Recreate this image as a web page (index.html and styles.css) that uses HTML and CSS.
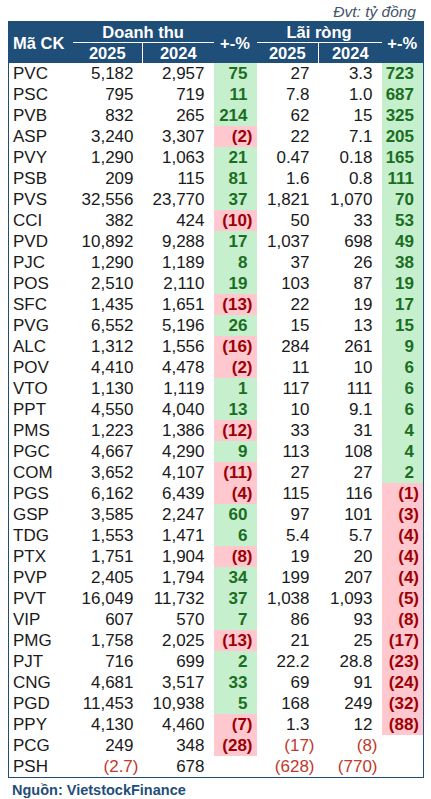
FILE: index.html
```html
<!DOCTYPE html>
<html>
<head>
  <meta charset="UTF-8">
  <meta name="viewport" content="width=device-width, initial-scale=1">
  <title>Doanh thu - Lãi ròng</title>

  <link rel="stylesheet" href="styles.css">
</head>

<body>

<main class="sheet">
  <div class="unit">Đvt: tỷ đồng</div>

  <table class="results">
    <colgroup>
      <col class="col-code">
      <col class="col-rev">
      <col class="col-rev2">
      <col class="col-pct">
      <col class="col-np">
      <col class="col-np2">
      <col class="col-pct2">
    </colgroup>
    <thead>
      <tr>
        <th rowspan="2" class="results__code">Mã CK</th>
        <th colspan="2" class="results__group">Doanh thu</th>
        <th rowspan="2">+-%</th>
        <th colspan="2" class="results__group">Lãi ròng</th>
        <th rowspan="2">+-%</th>
      </tr>
      <tr>
        <th>2025</th>
        <th class="results__split">2024</th>
        <th>2025</th>
        <th class="results__split">2024</th>
      </tr>
    </thead>
    <tbody id="js-rows"></tbody>
  </table>

  <div class="source">Nguồn: VietstockFinance</div>
</main>


<script type="text/javascript">
var rows = [
  ['PVC', '5,182', '2,957', '75', '27', '3.3', '723'],
  ['PSC', '795', '719', '11', '7.8', '1.0', '687'],
  ['PVB', '832', '265', '214', '62', '15', '325'],
  ['ASP', '3,240', '3,307', '(2)', '22', '7.1', '205'],
  ['PVY', '1,290', '1,063', '21', '0.47', '0.18', '165'],
  ['PSB', '209', '115', '81', '1.6', '0.8', '111'],
  ['PVS', '32,556', '23,770', '37', '1,821', '1,070', '70'],
  ['CCI', '382', '424', '(10)', '50', '33', '53'],
  ['PVD', '10,892', '9,288', '17', '1,037', '698', '49'],
  ['PJC', '1,290', '1,189', '8', '37', '26', '38'],
  ['POS', '2,510', '2,110', '19', '103', '87', '19'],
  ['SFC', '1,435', '1,651', '(13)', '22', '19', '17'],
  ['PVG', '6,552', '5,196', '26', '15', '13', '15'],
  ['ALC', '1,312', '1,556', '(16)', '284', '261', '9'],
  ['POV', '4,410', '4,478', '(2)', '11', '10', '6'],
  ['VTO', '1,130', '1,119', '1', '117', '111', '6'],
  ['PPT', '4,550', '4,040', '13', '10', '9.1', '6'],
  ['PMS', '1,223', '1,386', '(12)', '33', '31', '4'],
  ['PGC', '4,667', '4,290', '9', '113', '108', '4'],
  ['COM', '3,652', '4,107', '(11)', '27', '27', '2'],
  ['PGS', '6,162', '6,439', '(4)', '115', '116', '(1)'],
  ['GSP', '3,585', '2,247', '60', '97', '101', '(3)'],
  ['TDG', '1,553', '1,471', '6', '5.4', '5.7', '(4)'],
  ['PTX', '1,751', '1,904', '(8)', '19', '20', '(4)'],
  ['PVP', '2,405', '1,794', '34', '199', '207', '(4)'],
  ['PVT', '16,049', '11,732', '37', '1,038', '1,093', '(5)'],
  ['VIP', '607', '570', '7', '86', '93', '(8)'],
  ['PMG', '1,758', '2,025', '(13)', '21', '25', '(17)'],
  ['PJT', '716', '699', '2', '22.2', '28.8', '(23)'],
  ['CNG', '4,681', '3,517', '33', '69', '91', '(24)'],
  ['PGD', '11,453', '10,938', '5', '168', '249', '(32)'],
  ['PPY', '4,130', '4,460', '(7)', '1.3', '12', '(88)'],
  ['PCG', '249', '348', '(28)', '(17)', '(8)', ''],
  ['PSH', '(2.7)', '678', '', '(628)', '(770)', '']
];

function isNegative(value) {
  return value.charAt(0) === '(';
}

function renderRows(rows) {
  var html = '';

  for (var i = 0; i < rows.length; i++) {
    var row = rows[i];
    html += '<tr><td class="results__code">' + row[0] + '</td>';

    for (var j = 1; j < row.length; j++) {
      var value = row[j];
      var cls = 'num';

      if (value === '') {
        cls += ' num--empty';
      } else if (j === 3 || j === 6) {
        // change columns get the conditional fill
        cls += isNegative(value) ? ' pct pct--down' : ' pct pct--up';
      } else if (isNegative(value)) {
        cls += ' num--neg';
      }

      html += '<td class="' + cls + '">' + value + '</td>';
    }
    html += '</tr>';
  }
  document.getElementById('js-rows').innerHTML = html;
}

renderRows(rows);
</script>

</body>
</html>
```

FILE: styles.css
```css
html,
body {
  -webkit-font-smoothing: antialiased;
}

body {
  margin: 0;
  font-family: "Liberation Sans", Arial, sans-serif;
  color: #1a1a1a;
  background: #fff;
}

.sheet {
  padding: 0 8px;
}

.unit {
  height: 21px;
  padding: 2px 7px 0 0;
  box-sizing: border-box;
  text-align: right;
  font-size: 15.5px;
  line-height: 19px;
  font-style: italic;
  color: #44546a;
}


/* Table */

.results {
  width: 415px;
  table-layout: fixed;
  border-collapse: collapse;
  border: 1px solid #1f4e79;
  font-size: 17px;
}

.col-code { width: 64px; }
.col-rev  { width: 70px; }
.col-rev2 { width: 71px; }
.col-pct  { width: 43px; }
.col-np   { width: 62px; }
.col-np2  { width: 63px; }
.col-pct2 { width: 42px; }

.results th {
  height: 20px;
  padding: 0;
  background-color: #1f4e79;
  color: #fff;
  font-size: 16.5px;
  font-weight: bold;
  line-height: 20px;
  text-align: center;
}

.results th.results__code {
  padding-left: 4px;
  text-align: left;
}

.results__group { border-bottom: 1px solid #fff; }

.results__split { border-left: 1px solid #fff; }

.results td {
  height: 21px;
  padding: 0;
  line-height: 21px;
  white-space: nowrap;
}

.results td.results__code { padding-left: 4px; }

.num {
  padding-right: 9px !important;
  text-align: right;
}

.num--neg {
  padding-right: 4px !important;
  color: #c0392b;
}

.pct { font-weight: bold; }

.pct--up {
  background-color: #c6efce;
  color: #1b6e1f;
}

.pct--down {
  padding-right: 4px !important;
  background-color: #ffc7ce;
  color: #9c0006;
}


/* Footer */

.source {
  padding: 3px 0 0 4px;
  font-size: 14.5px;
  line-height: 18px;
  font-weight: bold;
  color: #1f4e79;
}
```
